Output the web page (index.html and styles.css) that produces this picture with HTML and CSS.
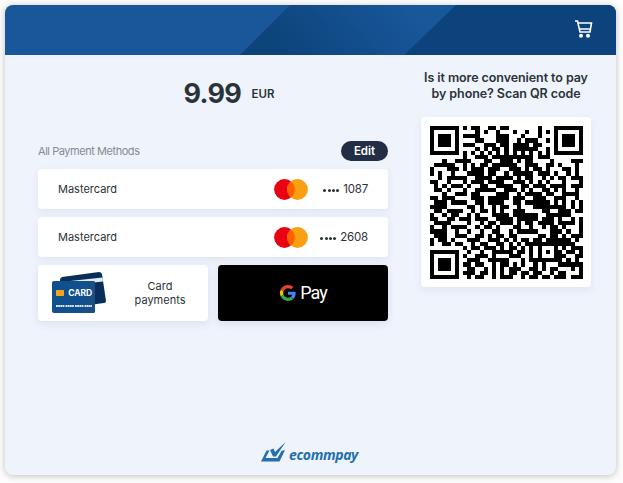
FILE: index.html
```html
<!DOCTYPE html>
<html lang="en">
<head>
<meta charset="utf-8">
<title>Payment</title>
<link rel="stylesheet" href="styles.css">
</head>
<body>
<main class="checkout">
  <header class="header">
    <svg class="stripes" viewBox="0 0 611 50" preserveAspectRatio="none">
      <defs><linearGradient id="band" x1="0" y1="0.5" x2="1" y2="0.3"><stop offset="0.12" stop-color="#0d447c"/><stop offset="0.85" stop-color="#19579b"/></linearGradient></defs>
      <path fill="url(#band)" d="M285 0H451L399 50H235Z"/>
      <path fill="#0d437d" d="M451 0H611V50H399Z"/>
    </svg>
    <svg class="cart" viewBox="0 0 18 20" fill="none" stroke="#fff" stroke-width="1.6">
      <path d="M0 2H2.500L5 13H15L16.500 4H3.500M5 10H15.500"/>
      <circle cx="6" cy="16.700" r="1.200" fill="#fff"/><circle cx="13" cy="16.700" r="1.200" fill="#fff"/>
    </svg>
  </header>
  <div class="body">
    <section class="methods">
      <div class="amount"><span class="value">9.99</span><span class="currency">EUR</span></div>
      <div class="bar"><span class="all">All Payment Methods</span><button class="edit">Edit</button></div>
      <div class="saved">
        <span class="brand">Mastercard</span>
        <svg class="mc" viewBox="0 0 34 21"><circle cx="10.5" cy="10.5" r="10.4" fill="#eb0014"/><circle cx="23.5" cy="10.5" r="10.4" fill="#f99f12"/><path d="M17 2.4A10.4 10.4 0 0 1 17 18.6A10.4 10.4 0 0 1 17 2.4" fill="#ff5f00"/></svg>
        <span class="number"><span class="dots"><i></i><i></i><i></i><i></i></span>1087</span>
      </div>
      <div class="saved">
        <span class="brand">Mastercard</span>
        <svg class="mc" viewBox="0 0 34 21"><circle cx="10.5" cy="10.5" r="10.4" fill="#eb0014"/><circle cx="23.5" cy="10.5" r="10.4" fill="#f99f12"/><path d="M17 2.4A10.4 10.4 0 0 1 17 18.6A10.4 10.4 0 0 1 17 2.4" fill="#ff5f00"/></svg>
        <span class="number"><span class="dots"><i></i><i></i><i></i><i></i></span>2608</span>
      </div>
      <div class="tiles">
        <div class="tile">
          <svg class="cards" viewBox="0 0 56 44">
            <path fill="#092e59" d="M10 6L47 1Q49 1 50 3L54 30Q54 32 52 32L14 37Q12 37 12 35L8 9Q8 7 10 6Z"/>
            <path fill="#e3eaf4" d="M9 11L50.5 6.5L51 10.5L10 15Z"/>
            <rect y="10" width="43" height="32" rx="2" fill="#11508f"/>
            <path fill="#194f84" d="M38 10H41Q43 10 43 12V40Q43 42 41 42H30Z"/>
            <rect x="4" y="19" width="8" height="6" rx=".7" fill="#f9a51a"/>
            <text x="16.2" y="25" textLength="24" class="cardtext">CARD</text>
            <path stroke="#dce8f5" stroke-width="2.2" stroke-dasharray="1.8 .4 1.8 .4 1.8 .4 1.8 1.1" d="M4 35H40"/>
          </svg>
          <span class="label">Card<br>payments</span>
        </div>
        <div class="tile gpay">
          <svg class="google" viewBox="0 0 48 48"><path fill="#ea4335" d="M24 9.5c3.5 0 6.700 1.200 9.200 3.600l6.900-6.900C35.900 2.400 30.500 0 24 0 14.600 0 6.500 5.400 2.600 13.200l8 6.200C12.400 13.700 17.700 9.500 24 9.500z"/><path fill="#4285f4" d="M47 24.600c0-1.600-.2-3.100-.4-4.600H24v9h12.900c-.6 3-2.200 5.500-4.700 7.200l7.700 6C44.400 38 47 31.800 47 24.600z"/><path fill="#fbbc05" d="M10.500 28.600a14.500 14.500 0 0 1 0-9.200l-8-6.200a24 24 0 0 0 0 21.600z"/><path fill="#34a853" d="M24 48c6.500 0 11.900-2.100 15.900-5.800l-7.700-6c-2.200 1.500-4.900 2.300-8.200 2.300-6.300 0-11.600-4.200-13.500-9.900l-8 6.200C6.500 42.600 14.600 48 24 48z"/></svg>
          <span class="pay">Pay</span>
        </div>
      </div>
    </section>
    <aside class="phone">
      <p class="hint">Is it more convenient to pay<br>by phone? Scan QR code</p>
      <div class="qrbox"><svg id="qr" viewBox="0 0 37 37" shape-rendering="crispEdges"></svg></div>
    </aside>
  </div>
  <footer class="footer">
    <svg class="mark" viewBox="0 0 26 20" fill="#246fac"><path d="M5.500 8.500H8.500L4.500 16H16.500L20.500 9L24 8L18.500 19.500H0Z"/><path d="M9 8L12.500 6.500L14 10L24.500 0L15 14.500H12Z"/></svg>
    <span class="logo">ecommpay</span>
  </footer>
</main>
<script src="qr.js"></script>
</body>
</html>
```

FILE: styles.css
```css
* { box-sizing: border-box; }
body { margin: 0; padding: 5px 7px 8px 5px; height: 483px; overflow: hidden; background: #fdfdfd; font-family: Inter, "Liberation Sans", sans-serif; color: #2b3338; }
.checkout { display: flex; flex-direction: column; height: 470px; border-radius: 8px; background: #eef3fc; box-shadow: 0 1px 7px rgba(0,0,0,.25); overflow: hidden; }
.header { position: relative; flex: none; display: flex; justify-content: flex-end; height: 50px; padding: 14px 23px 0 0; background: #19579a; }
.stripes { position: absolute; inset: 0; width: 100%; height: 100%; }
.cart { position: relative; width: 18px; height: 20px; overflow: visible; }
.body { display: flex; flex: 1; padding-left: 33px; gap: 33px; }
.methods { width: 350px; }
.amount { display: flex; align-items: center; justify-content: center; height: 78px; font-weight: 700; padding-left: 52px; }
.value { width: 57px; font-size: 27px; line-height: 32px; letter-spacing: -.7px; white-space: nowrap; }
.currency { margin-left: 11px; width: 43px; font-size: 11.5px; font-weight: 600; }
.bar { display: flex; align-items: center; justify-content: space-between; height: 20px; margin: 8px 0 8px; }
.all { font-size: 11px; letter-spacing: -.45px; color: #858c94; }
.edit { width: 47px; height: 20px; padding: 0; border: 0; border-radius: 10px; background: #222e46; color: #fff; font: 600 11.5px Inter, sans-serif; }
.saved { display: flex; align-items: center; height: 40px; margin-bottom: 8px; padding: 0 20px; border-radius: 4px; background: #fff; box-shadow: 0 3px 9px rgba(60,80,120,.08); font-size: 11.5px; }
.brand { width: 216px; font-size: 11px; }
.mc { width: 34px; height: 21px; }
.number { display: flex; align-items: center; margin-left: auto; gap: 4px; font-size: 11.5px; letter-spacing: -.2px; }
.dots { display: flex; gap: 1.3px; padding-top: 2px; }
.dots i { width: 3px; height: 3px; border-radius: 50%; background: #2b3338; }
.tiles { display: flex; gap: 10px; }
.tile { display: flex; align-items: center; width: 170px; height: 56px; border-radius: 4px; background: #fff; box-shadow: 0 3px 9px rgba(60,80,120,.1); }
.cards { width: 56px; height: 44px; margin-left: 14px; }
.cardtext { font: 700 8.5px Inter, sans-serif; fill: #fff; }
.label { width: 76px; margin-left: 14px; text-align: center; font-size: 11px; line-height: 14px; }
.gpay { justify-content: center; gap: 4px; background: #000; color: #fff; }
.google { width: 16px; height: 16px; margin-left: 1px; }
.pay { font: 400 18px/22px Roboto, sans-serif; letter-spacing: -.9px; }
.phone { width: 170px; }
.hint { margin: 15px -10px; text-align: center; font-size: 12.5px; font-weight: 600; line-height: 16px; letter-spacing: -.08px; white-space: nowrap; }
.qrbox { height: 170px; padding: 9px 8px 8px 9px; border-radius: 4px; background: #fff; box-shadow: 0 3px 9px rgba(60,80,120,.08); }
#qr { display: block; width: 153px; height: 153px; }
.footer { flex: none; display: flex; justify-content: center; height: 33px; gap: 2px; }
.mark { width: 26px; height: 20px; }
.logo { margin-right: 2px; padding-top: 4px; font: italic 700 14px/18px "Open Sans", sans-serif; letter-spacing: -.38px; color: #246fac; }
```

FILE: qr.js
```js
const rows = [
  "1111111010110011011000000010001111111",
  "1000001000010100100010010010101000001",
  "1011101011110000111000100010001011101",
  "1011101000011000111001011100101011101",
  "1011101011100111011011110110001011101",
  "1000001000010101101011111100101000001",
  "1111111010101010101010101010101111111",
  "0000000010011101111111111011100000000",
  "0001001111000110011101011000010000111",
  "0111110010101101111110011100110100010",
  "1000111010111011100111010110100011010",
  "1010010001111011001011111011101001010",
  "0010111110011110111101011001010110111",
  "1100100010111011110011101010100010001",
  "0101011101001100111100110111011110111",
  "0110100010011111001110101001101010010",
  "0001001110110000111001011110110011110",
  "1101110000111011111011100111001110010",
  "0111011110011011110011011111101010101",
  "1111000001101001011001000111111110101",
  "0110111100101101010011100001100111011",
  "1001011001010001111011111100111111000",
  "1100110111011100111101111101110100101",
  "0111100001001011011101011011110111101",
  "1001011110010110100011001001011010001",
  "1111001001001001100101111100011101001",
  "0111001110011010110110000011011010111",
  "1011010001110011101010110110111111010",
  "1001101100101100110101011111111111100",
  "0000000010110111010110101010001010111",
  "1111111001001001111101101010101101101",
  "1000001010011101000111001010001110011",
  "1011101001110011111000101111111101010",
  "1011101011011001011010100101000111111",
  "1011101001100101010111001101011000101",
  "1000001011101101010110110110010110001",
  "1111111001011001011100101101101110111"
];
// Keep the three finder patterns and their quiet bands intact.
const finder = ["1111111", "1000001", "1011101", "1011101", "1011101", "1000001", "1111111"];
const cells = rows.map(r => r.split(""));
for (const [ox, oy] of [[0, 0], [30, 0], [0, 30]]) {
  for (let y = -1; y < 8; y++) for (let x = -1; x < 8; x++) {
    if (cells[oy + y] && ox + x >= 0 && ox + x < 37) cells[oy + y][ox + x] = finder[y]?.[x] ?? "0";
  }
}
let d = "";
cells.forEach((r, y) => r.forEach((c, x) => { if (c === "1") d += `M${x} ${y}h1v1h-1z`; }));
const path = document.createElementNS("http://www.w3.org/2000/svg", "path");
path.setAttribute("d", d);
document.getElementById("qr").append(path);
```
